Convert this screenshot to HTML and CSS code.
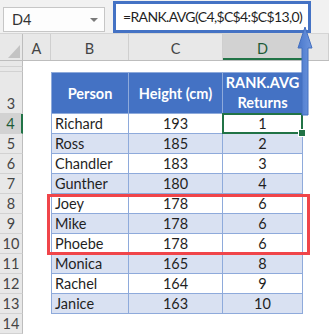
FILE: index.html
```html
<!DOCTYPE html>
<html>
  <head>
    <meta charset="utf-8">
    <title>RANK.AVG</title>
    <link rel="stylesheet" href="styles.css">
  </head>
  <body>
    <div class="window">

      <!-- formula bar -->
      <div class="formula-bar">
        <div class="name-box"><span>D4</span><span class="drop"></span></div>
        <div class="formula">=RANK.AVG(C4,$C$4:$C$13,0)</div>
      </div>

      <!-- grid -->
      <div class="sheet">
        <div class="row col-heads">
          <div class="rh corner"><span class="tri"></span></div>
          <div class="cell a">A</div>
          <div class="cell b">B</div>
          <div class="cell c">C</div>
          <div class="cell d active">D</div>
          <div class="cell e"></div>
        </div>
        <div class="row r1"><div class="rh"></div></div>
        <div class="row r2"><div class="rh"></div></div>
        <div class="row head">
          <div class="rh">3</div>
          <div class="cell a"></div>
          <div class="cell b t">Person</div>
          <div class="cell c t">Height (cm)</div>
          <div class="cell d t">RANK.AVG<br>Returns</div>
        </div>
        <div class="row">
          <div class="rh active">4</div><div class="cell a"></div>
          <div class="cell b t">Richard</div><div class="cell c t">193</div><div class="cell d t sel">1</div>
        </div>
        <div class="row band">
          <div class="rh">5</div><div class="cell a"></div>
          <div class="cell b t">Ross</div><div class="cell c t">185</div><div class="cell d t">2</div>
        </div>
        <div class="row">
          <div class="rh">6</div><div class="cell a"></div>
          <div class="cell b t">Chandler</div><div class="cell c t">183</div><div class="cell d t">3</div>
        </div>
        <div class="row band">
          <div class="rh">7</div><div class="cell a"></div>
          <div class="cell b t">Gunther</div><div class="cell c t">180</div><div class="cell d t">4</div>
        </div>
        <div class="row">
          <div class="rh">8</div><div class="cell a"></div>
          <div class="cell b t">Joey</div><div class="cell c t">178</div><div class="cell d t">6</div>
        </div>
        <div class="row band">
          <div class="rh">9</div><div class="cell a"></div>
          <div class="cell b t">Mike</div><div class="cell c t">178</div><div class="cell d t">6</div>
        </div>
        <div class="row">
          <div class="rh">10</div><div class="cell a"></div>
          <div class="cell b t">Phoebe</div><div class="cell c t">178</div><div class="cell d t">6</div>
        </div>
        <div class="row band">
          <div class="rh">11</div><div class="cell a"></div>
          <div class="cell b t">Monica</div><div class="cell c t">165</div><div class="cell d t">8</div>
        </div>
        <div class="row">
          <div class="rh">12</div><div class="cell a"></div>
          <div class="cell b t">Rachel</div><div class="cell c t">164</div><div class="cell d t">9</div>
        </div>
        <div class="row band">
          <div class="rh">13</div><div class="cell a"></div>
          <div class="cell b t">Janice</div><div class="cell c t">163</div><div class="cell d t">10</div>
        </div>
        <div class="row">
          <div class="rh">14</div>
        </div>
      </div>

      <!-- callouts -->
      <div class="tie-box"></div>
      <svg class="arrow" width="18" height="92" viewBox="0 0 18 92">
        <defs>
          <linearGradient id="ag" x1="0" y1="0" x2="1" y2="0">
            <stop offset="0" stop-color="#4a78cc"/>
            <stop offset="1" stop-color="#6f97de"/>
          </linearGradient>
        </defs>
        <path d="M9 1 L16 22 L12 22 L12 89 L6 89 L6 22 L2 22 Z" fill="url(#ag)" stroke="#4470c0" stroke-width="1"/>
      </svg>
    </div>
  </body>
</html>
```

FILE: styles.css
```css
* { box-sizing: border-box; }
body { margin: 0; background: #fff; font-family: "Lato", "Liberation Sans", sans-serif; font-size: 14.5px; color: #1f1f1f; }
.window { position: relative; width: 329px; height: 334px; overflow: hidden; }

.formula-bar { height: 34px; background: #f1f1f1; border-bottom: 1px solid #d5d5d5; display: flex; align-items: flex-start; }
.name-box { margin: 7px 0 0 3px; width: 102px; height: 25px; background: #fdfdfd; border: 1px solid #c6c6c6;
     display: flex; align-items: center; justify-content: space-between; padding: 0 6px 0 8px; color: #333; }
.drop { width: 0; height: 0; border-left: 4px solid transparent; border-right: 4px solid transparent; border-top: 4px solid #7a7a7a; }
.formula { margin: 1px 0 0 8px; width: 198px; height: 32px; background: #fff; border: 3px solid #4472c4;
     padding: 0 0 0 7px; font-size: 14px; letter-spacing: -0.65px; line-height: 26px; color: #1f1f1f; white-space: nowrap; overflow: hidden; }

.row { display: flex; height: 20px; }
.row.r1 { height: 6px; }
.row.r2 { height: 5px; }
.row.head { height: 42px; }
.col-heads { height: 27px; background: #e8e8e8; border-bottom: 1px solid #bdbdbd; }

.rh { width: 23px; flex: none; background: #e8e8e8; border-right: 1px solid #bdbdbd; border-bottom: 1px solid #d2d2d2;
     display: flex; align-items: flex-end; justify-content: center; color: #444; line-height: 19px; }
.rh.active { background: #d2d2d2; border-right: 2px solid #217346; color: #1e5b37; }
.corner { position: relative; border-bottom: none; }
.tri { position: absolute; left: 8px; top: 11px; width: 0; height: 0; border-left: 12px solid transparent; border-bottom: 13px solid #c3c3c3; }

.cell { flex: none; display: flex; align-items: center; line-height: 19px; white-space: nowrap; }
.a { width: 28px; }
.b { width: 78px; padding-left: 3px; }
.c { width: 94px; justify-content: center; }
.d { width: 80px; justify-content: center; text-align: center; }
.e { flex: 1; }

.col-heads .cell { justify-content: center; align-items: flex-end; padding: 0 0 2px 0; color: #444; border-right: 1px solid #cfcfcf; }
.col-heads .active { background: #d2d2d2; border-bottom: 2px solid #217346; color: #1e5b37; padding-bottom: 0; }

.t { border-right: 1px solid #8eaadb; border-bottom: 1px solid #8eaadb; }
.b.t { border-left: 1px solid #8eaadb; }
.band .t { background: #d9e1f2; }
.head .t { background: #4472c4; color: #fff; font-weight: bold; justify-content: center; padding: 0; border-top: 1px solid #8eaadb; }
.head .d.t { line-height: 20px; }

.sel { position: relative; }
.sel::after { content: ''; position: absolute; left: -1px; top: -1px; right: -1px; bottom: -1px; border: 2px solid #217346; }
.sel::before { content: ''; position: absolute; right: -4px; bottom: -4px; width: 6px; height: 6px; background: #217346; border: 1px solid #fff; z-index: 1; }

.tie-box { position: absolute; left: 47px; top: 194px; width: 263px; height: 61px; border: 3px solid #f0454a; }
.arrow { position: absolute; left: 296px; top: 26px; }
```
